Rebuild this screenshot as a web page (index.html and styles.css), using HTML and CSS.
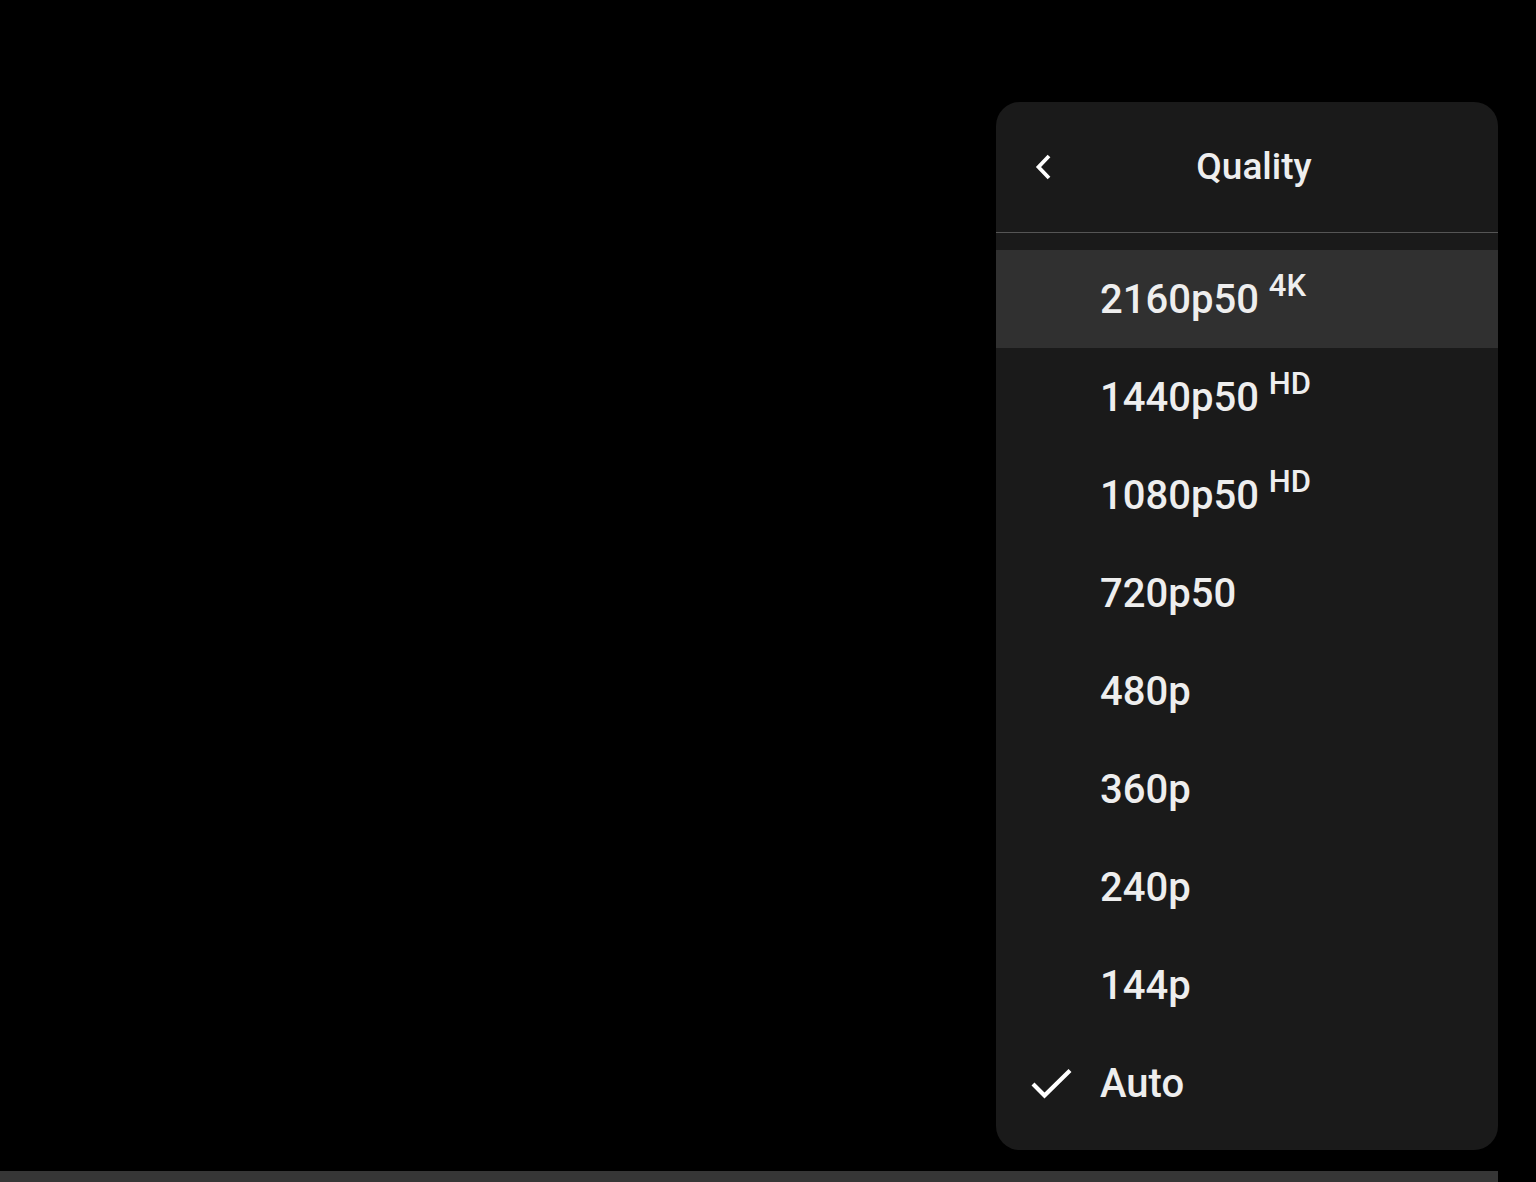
FILE: index.html
```html
<!DOCTYPE html>
<html>
<head>
<meta charset="utf-8">
<link rel="stylesheet" href="styles.css">
</head>
<body>
<div class="player">
  <div class="stage">
    <div class="menu">
      <div class="menu-header">
        <button class="back" aria-label="Back">
          <svg width="20" height="28" viewBox="0 0 20 28"><path d="M15 3 L4.5 14 L15 25" fill="none" stroke="#fff" stroke-width="3.8" stroke-linecap="butt" stroke-linejoin="miter"/></svg>
        </button>
        <div class="title">Quality</div>
      </div>
      <div class="items">
        <div class="item hover"><span class="check"></span><span class="label">2160p50 <sup>4K</sup></span></div>
        <div class="item"><span class="check"></span><span class="label">1440p50 <sup>HD</sup></span></div>
        <div class="item"><span class="check"></span><span class="label">1080p50 <sup>HD</sup></span></div>
        <div class="item"><span class="check"></span><span class="label">720p50</span></div>
        <div class="item"><span class="check"></span><span class="label">480p</span></div>
        <div class="item"><span class="check"></span><span class="label">360p</span></div>
        <div class="item"><span class="check"></span><span class="label">240p</span></div>
        <div class="item"><span class="check"></span><span class="label">144p</span></div>
        <div class="item"><span class="check"><svg width="48" height="34" viewBox="0 0 48 34"><path d="M8 18 L19.5 29.5 L45 4.5" fill="none" stroke="#fff" stroke-width="4.2"/></svg></span><span class="label">Auto</span></div>
      </div>
    </div>
  </div>
  <div class="progress"></div>
</div>
</body>
</html>
```
FILE: styles.css
```css
html, body {
  margin: 0;
  padding: 0;
  background: #000;
  width: 1536px;
  height: 1182px;
  overflow: hidden;
  font-family: Roboto, "Liberation Sans", Arial, sans-serif;
}
.player {
  display: flex;
  flex-direction: column;
  width: 1536px;
  height: 1182px;
}
.stage {
  display: flex;
  justify-content: flex-end;
  padding: 102px 38px 0 0;
}
.menu {
  width: 502px;
  height: 1048px;
  background: #1a1a1a;
  border-radius: 24px;
  overflow: hidden;
  display: flex;
  flex-direction: column;
}
.menu-header {
  box-sizing: border-box;
  height: 131px;
  border-bottom: 1px solid #555;
  display: flex;
  align-items: center;
}
.back {
  background: none;
  border: 0;
  padding: 0;
  margin: 0 0 0 38px;
  width: 20px;
  height: 28px;
  display: flex;
  align-items: center;
  justify-content: center;
}
.title {
  flex: 1;
  text-align: center;
  color: #eee;
  font-size: 37px;
  font-weight: 500;
  margin-right: 44px;
  padding-bottom: 2px;
}
.items {
  padding-top: 17px;
  display: flex;
  flex-direction: column;
}
.item {
  height: 98px;
  display: flex;
  align-items: center;
  color: #eee;
  font-size: 40px;
  font-weight: 500;
}
.item.hover {
  background: #303030;
}
.check {
  width: 104px;
  padding-left: 29px;
  box-sizing: border-box;
  display: flex;
  align-items: center;
}
.label {
  white-space: nowrap;
}
.label sup {
  font-size: 31px;
  vertical-align: 17px;
  line-height: 0;
}
.progress {
  margin-top: 21px;
  width: 1498px;
  height: 11px;
  background: #363636;
}
```
